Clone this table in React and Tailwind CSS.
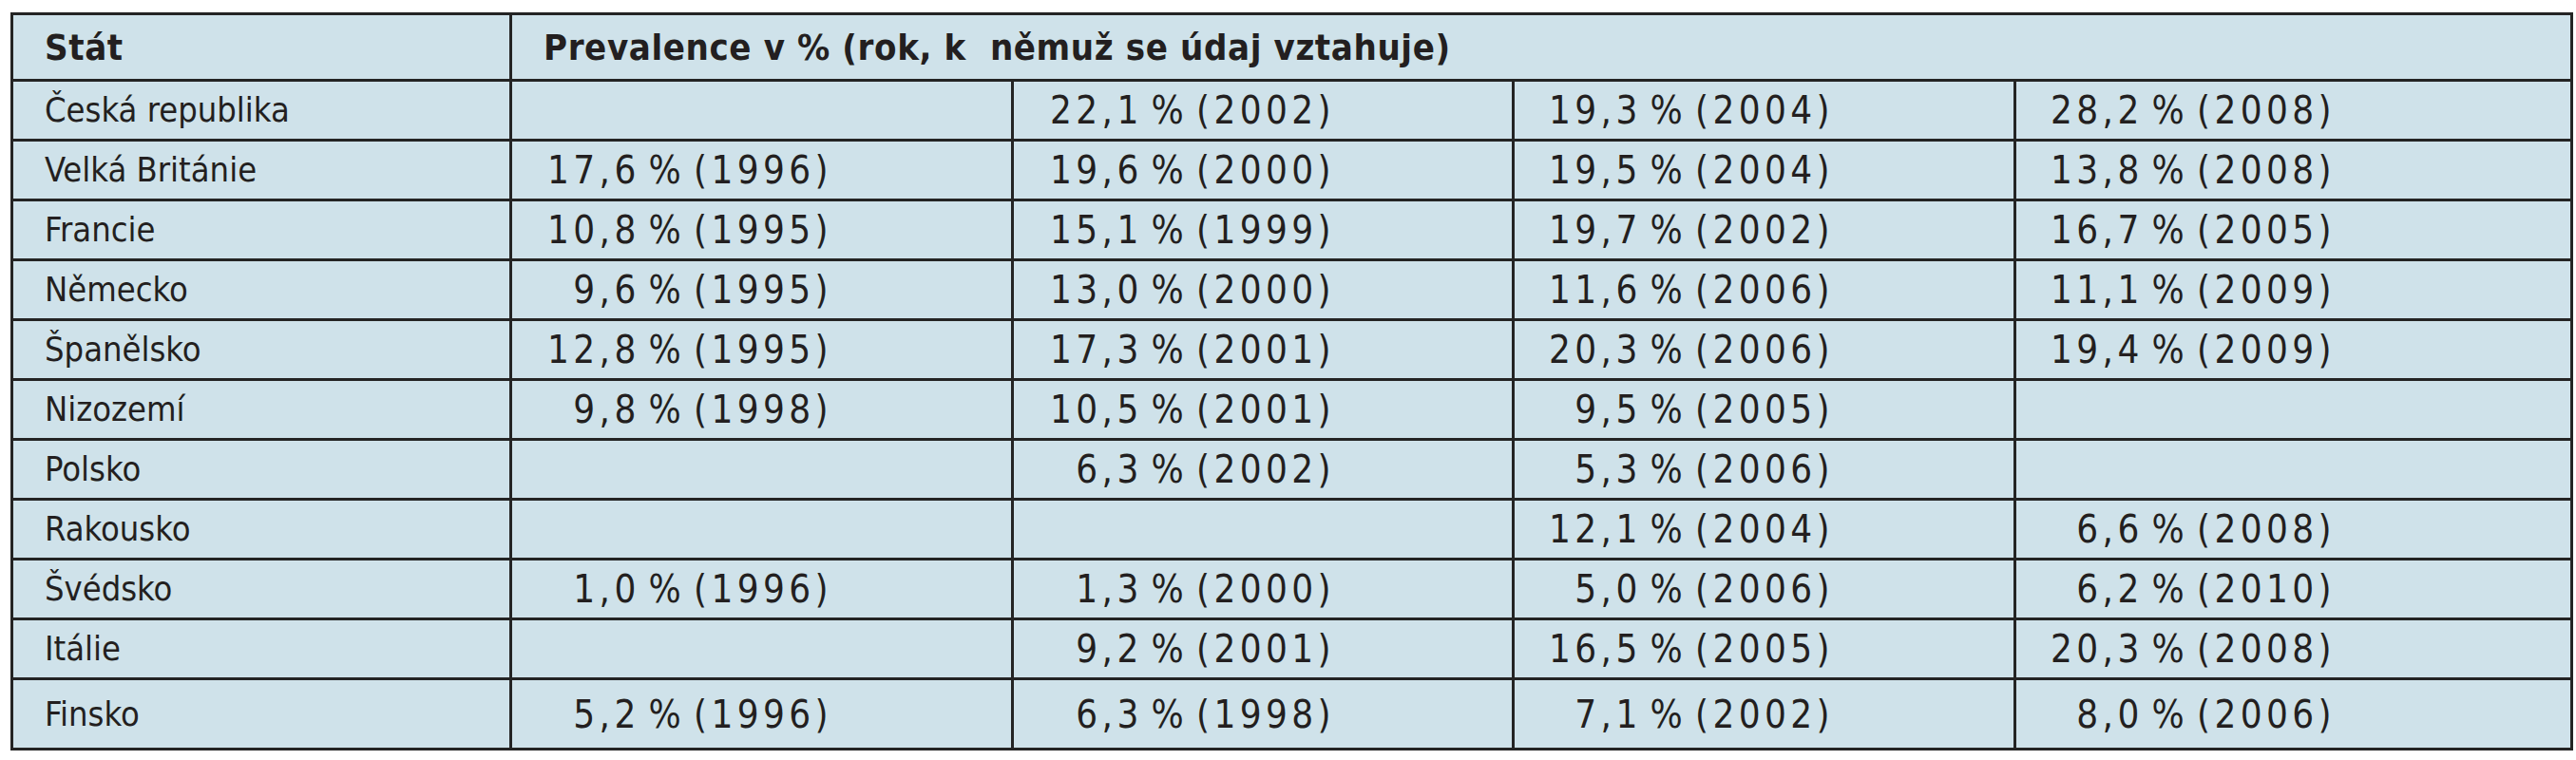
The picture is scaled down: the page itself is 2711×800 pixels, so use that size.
import React from 'react';

const rows = [
  ['Česká republika', '', '22,1 % (2002)', '19,3 % (2004)', '28,2 % (2008)'],
  ['Velká Británie', '17,6 % (1996)', '19,6 % (2000)', '19,5 % (2004)', '13,8 % (2008)'],
  ['Francie', '10,8 % (1995)', '15,1 % (1999)', '19,7 % (2002)', '16,7 % (2005)'],
  ['Německo', '9,6 % (1995)', '13,0 % (2000)', '11,6 % (2006)', '11,1 % (2009)'],
  ['Španělsko', '12,8 % (1995)', '17,3 % (2001)', '20,3 % (2006)', '19,4 % (2009)'],
  ['Nizozemí', '9,8 % (1998)', '10,5 % (2001)', '9,5 % (2005)', ''],
  ['Polsko', '', '6,3 % (2002)', '5,3 % (2006)', ''],
  ['Rakousko', '', '', '12,1 % (2004)', '6,6 % (2008)'],
  ['Švédsko', '1,0 % (1996)', '1,3 % (2000)', '5,0 % (2006)', '6,2 % (2010)'],
  ['Itálie', '', '9,2 % (2001)', '16,5 % (2005)', '20,3 % (2008)'],
  ['Finsko', '5,2 % (1996)', '6,3 % (1998)', '7,1 % (2002)', '8,0 % (2006)'],
];

// right padding per data column so the values end where the print has them
const valuePad = ['pr-[188px]', 'pr-[186px]', 'pr-[189px]', 'pr-[247px]'];

const cell = 'border-[3px] border-[#242424]';

export default function App() {
  return (
    <div className="min-h-[800px] w-[2711px] bg-white pl-[11px] pt-[13px]">
      <table className="table-fixed border-collapse bg-[#cfe2ea] font-['DejaVu_Sans_Condensed','DejaVu_Sans',sans-serif] text-[36px] leading-none text-[#231f20] [font-stretch:condensed]">
        <colgroup>
          <col className="w-[525px]" />
          <col className="w-[528px]" />
          <col className="w-[527px]" />
          <col className="w-[528px]" />
          <col className="w-[586px]" />
        </colgroup>
        <thead>
          <tr className="h-[70px] text-[38px] tracking-[0.6px]">
            <th className={`${cell} pl-[33px] text-left align-middle font-bold`}>Stát</th>
            <th colSpan={4} className={`${cell} pl-[33px] text-left align-middle font-bold whitespace-pre`}>
              {'Prevalence v % (rok, k  němuž se údaj vztahuje)'}
            </th>
          </tr>
        </thead>
        <tbody>
          {rows.map((r, i) => {
            const last = i === rows.length - 1;
            return (
              <tr key={r[0]} className={last ? 'h-[74px]' : 'h-[63px]'}>
                <td className={`${cell} pl-[33px] text-left ${last ? 'align-top pt-[18px]' : 'align-middle'}`}>{r[0]}</td>
                {r.slice(1).map((v, j) => (
                  <td
                    key={j}
                    className={`${cell} ${valuePad[j]} text-right text-[40px] tracking-[4.4px] [word-spacing:-7px] whitespace-nowrap ${last ? 'align-top pt-[16px]' : 'align-middle'}`}
                  >
                    {v}
                  </td>
                ))}
              </tr>
            );
          })}
        </tbody>
      </table>
    </div>
  );
}
